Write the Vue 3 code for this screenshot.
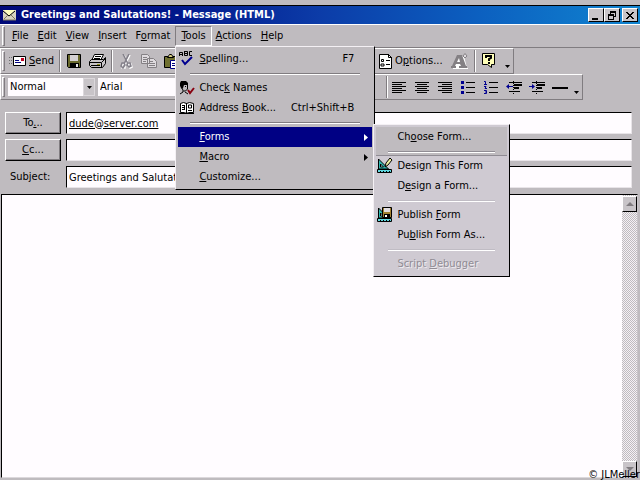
<script setup>
import { ref } from 'vue'

const to = ref('dude@server.com')
const cc = ref('')
const subject = ref('Greetings and Salutations!')
const body = ref('')
const style = ref('Normal')
const font = ref('Arial')

// Each label is split as [before, access key, after].
const menusBefore = [['', 'F', 'ile'], ['', 'E', 'dit'], ['', 'V', 'iew'], ['', 'I', 'nsert'], ['F', 'o', 'rmat']]
const menusAfter = [['', 'A', 'ctions'], ['', 'H', 'elp']]

const toolsMenu = [
  { label: ['', 'S', 'pelling...'], keys: 'F7', icon: 'spell' },
  { sep: true },
  { label: ['Chec', 'k', ' Names'], icon: 'names' },
  { label: ['Address ', 'B', 'ook...'], keys: 'Ctrl+Shift+B', icon: 'book' },
  { sep: true },
  {
    label: ['', 'F', 'orms'],
    active: true,
    arrow: true,
    sub: [
      { label: ['Ch', 'o', 'ose Form...'] },
      { sep: true },
      { label: ['Desi', 'g', 'n This Form'], icon: 'design' },
      { label: ['D', 'e', 'sign a Form...'] },
      { sep: true },
      { label: ['Publish ', 'F', 'orm'], icon: 'publish' },
      { label: ['Pu', 'b', 'lish Form As...'] },
      { sep: true },
      { label: ['Script ', 'D', 'ebugger'], disabled: true },
    ],
  },
  { label: ['', 'M', 'acro'], arrow: true },
  { label: ['', 'C', 'ustomize...'] },
]

const lines = {
  left: 'M0 1h14M0 3h10M0 5h14M0 7h10M0 9h14M0 11h10',
  center: 'M0 1h14M2 3h10M0 5h14M2 7h10M0 9h14M2 11h10',
  right: 'M0 1h14M4 3h10M0 5h14M4 7h10M0 9h14M4 11h10',
}
</script>

<template>
  <main class="window">
    <header class="title">
      <svg class="mail" width="13" height="12" viewBox="0 0 13 12">
        <path fill="#d8d4c0" d="M0 1h13v10H0z" />
        <path fill="#ffffc0" d="M1 1h11L6 7z" />
        <path fill="none" stroke="#000" d="M0 2l6 5 6-5" />
        <path fill="none" stroke="#807860" d="M1 10l4-4M12 10L8 6M0 11h13" />
      </svg>
      <h1>Greetings and Salutations! - Message (HTML)</h1>
      <div class="caption">
        <button aria-label="Minimize"><svg width="10" height="9" viewBox="0 0 10 9"><path d="M1 7h6v2H1z" /></svg></button>
        <button aria-label="Restore"><svg width="10" height="9" viewBox="0 0 10 9"><path d="M3 0h6v6H7V5h1V2H4v1H3zM1 3h6v6H1zM2 5v3h4V5z" fill-rule="evenodd" /></svg></button>
        <button aria-label="Close" class="close"><svg width="10" height="9" viewBox="0 0 10 9"><path d="M1 1h2v1h1v1h2V2h1V1h2v1H8v1H7v1H6v1h1v1h1v1h1v1H7V7H6V6H4v1H3v1H1V7h1V6h1V5h1V4H3V3H2V2H1z" /></svg></button>
      </div>
    </header>

    <nav class="menubar">
      <i class="grip"></i>
      <button v-for="m in menusBefore" :key="m.join('')" class="menu">{{ m[0] }}<u>{{ m[1] }}</u>{{ m[2] }}</button>
      <div class="open">
        <button class="menu pressed"><u>T</u>ools</button>
        <ul class="popup tools">
          <li v-for="(it, i) in toolsMenu" :key="i" :class="{ sep: it.sep }">
            <button v-if="!it.sep" class="item" :class="{ active: it.active }">
              <span class="icon">
                <svg v-if="it.icon === 'spell'" width="16" height="16" viewBox="0 0 16 16">
                  <path fill="none" stroke="#000" d="M.5 5V1.5h3V5M.5 3.5h3M5.500 0v4.500h3v-4h-3M5.500 2.500h3M13 .5h-2.500v4H13" />
                  <path fill="none" stroke="#000090" stroke-width="2" d="M3 9l3 4 7-7" />
                </svg>
                <svg v-else-if="it.icon === 'names'" width="16" height="16" viewBox="0 0 16 16">
                  <path fill="#000" d="M2 1h5l2 2v4L8 5H5L4 8l-1 1-2-3V3z" />
                  <path fill="none" stroke="#000" d="M8.500 4v5l-2 2h-2M2 7l2 3v2l-3 2M6 12l3 2M6.500 6v1" />
                  <path fill="none" stroke="#880010" stroke-width="2" d="M9 10l2 3 4-5" />
                </svg>
                <svg v-else-if="it.icon === 'book'" width="16" height="14" viewBox="0 0 16 14">
                  <path fill="#fff" stroke="#000" d="M1.500 2.500l3-1 3 1 3-1 4 1v9h-5l-2 1-2-1h-4zM7.500 2v10M0 12.500h15" />
                  <path fill="none" stroke="#000" d="M3 4.500h3M3 6.500h2M3 8.500h3M9.500 4v3h3V4h-3M9 9.500h4M5.500 5v4" />
                </svg>
              </span>
              <span>{{ it.label[0] }}<u>{{ it.label[1] }}</u>{{ it.label[2] }}</span>
              <span v-if="it.keys" class="keys">{{ it.keys }}</span>
              <svg v-if="it.arrow" class="more" width="4" height="7" viewBox="0 0 4 7"><path fill="currentColor" d="M0 0l4 3.500L0 7z" /></svg>
            </button>
            <ul v-if="it.sub" class="popup forms">
              <li v-for="(s, j) in it.sub" :key="j" :class="{ sep: s.sep, lead: j < 2 }">
                <button v-if="!s.sep" class="item" :disabled="s.disabled">
                  <span class="icon">
                    <svg v-if="s.icon" width="16" height="16" viewBox="0 0 16 16">
                      <path fill="#30b8b0" stroke="#000" d="M1.500 1v10h10z" />
                      <path fill="#d0f0f0" stroke="#000" d="M3.500 6v3h3z" />
                      <path fill="#60d8e0" stroke="#000" d="M.5 11.500h14v3H.5z" />
                      <path stroke="#000" d="M3.500 13v2M6.500 13v2M9.500 13v2M12.500 13v2" />
                      <path v-if="s.icon === 'design'" fill="#f0f0a0" stroke="#000" d="M8 9l1-4 4-5 2 2-4 5z" />
                      <g v-else>
                        <path fill="#a08030" stroke="#000" d="M5.500.5h9v10h-9z" />
                        <path fill="#e0dce0" d="M7 1h6v4H7z" />
                        <path fill="#000" d="M7 7h6v3H7z" />
                        <path fill="#fff" d="M8 8h2v2H8z" />
                      </g>
                    </svg>
                  </span>
                  <span>{{ s.label[0] }}<u>{{ s.label[1] }}</u>{{ s.label[2] }}</span>
                </button>
              </li>
            </ul>
          </li>
        </ul>
      </div>
      <button v-for="m in menusAfter" :key="m.join('')" class="menu">{{ m[0] }}<u>{{ m[1] }}</u>{{ m[2] }}</button>
    </nav>

    <div class="toolbar">
      <i class="grip"></i>
      <div class="start">
        <button class="tool">
          <svg width="17" height="12" viewBox="0 0 17 12">
            <path stroke="#707070" stroke-dasharray="1 1" d="M0 2.500h4M0 5.500h4M0 8.500h4" />
            <path fill="#fff" stroke="#000" d="M4.500 1.500h12v9h-12z" />
            <path fill="#c00020" d="M12 3h3v3h-3z" />
            <path stroke="#000080" d="M6 5.500h4M6 7.500h6" />
          </svg>
          <span><u>S</u>end</span>
        </button>
        <i class="rule"></i>
        <button class="tool" aria-label="Save">
          <svg width="15" height="15" viewBox="0 0 15 15">
            <path fill="#68682c" stroke="#000" d="M.5.5h13v13h-12l-1-1z" />
            <path fill="#d4d0d4" d="M3 1h8v6H3z" /><path fill="#000" d="M3 9h9v5H3z" /><path fill="#e8e8e8" d="M9 10h2v3H9z" />
          </svg>
        </button>
        <button class="tool" aria-label="Print">
          <svg width="17" height="15" viewBox="0 0 17 15">
            <path fill="#fff" stroke="#000" d="M5.500.5h9l-3 6h-9z" />
            <path stroke="#000" d="M6 2.500h6M5 4.500h6" />
            <path fill="#c8c4c8" stroke="#000" d="M.5 7.500l2-2h12l2-2v6l-3 4h-11l-2-2z" />
            <path fill="none" stroke="#000" d="M0 8.500h12.500v5M13 8l3-3M2 11.500h9" /><path stroke="#909020" d="M8 10.500h3" />
          </svg>
        </button>
        <i class="rule"></i>
        <button class="tool faded" aria-label="Cut">
          <svg width="13" height="15" viewBox="0 0 13 15">
            <g fill="none" stroke-width="1.500"><path stroke="#fff" d="M4 1l5 10M10 1L5 11M3 10h2v4H2v-3zM9 10h2l1 3-2 1-2-2z" /><path stroke="#84808a" d="M3 0l5 10M9 0L4 10M2 9h2l1 2-2 3-2-2zM8 9h2l1 3-2 1-2-2z" /></g>
          </svg>
        </button>
        <button class="tool" aria-label="Copy">
          <svg width="16" height="14" viewBox="0 0 16 14">
            <g fill="#dfdbdf" stroke="#848084"><path d="M.5.5h6l2 2v7h-8zM6.500 4.500h6l3 3v6h-9z" /><path d="M2 3.500h4M2 5.500h4M2 7.500h3M8 7.500h4M8 9.500h6M8 11.500h6" /></g>
          </svg>
        </button>
        <button class="tool" aria-label="Paste">
          <svg width="16" height="15" viewBox="0 0 16 15">
            <path fill="#707030" stroke="#000" d="M.5 2.500h12v11H.5z" /><path fill="#d8d080" stroke="#000" d="M3.500 3.500l2-3h2l2 3z" />
            <path fill="#fff" stroke="#000080" d="M6.500 6.500h8v8h-8z" /><path stroke="#000080" d="M8 9.500h5M8 11.500h5" />
          </svg>
        </button>
      </div>
      <button class="tool">
        <svg width="13" height="15" viewBox="0 0 13 15">
          <path fill="#fff" stroke="#000" d="M.5.500h9l3 3v11H.5z" />
          <path fill="none" stroke="#000" d="M9.500 0v3.500H13M2.500 5.500h2v2h-2zM2 10h3v2H2zM7 6.500h4M7 10.500h4" />
        </svg>
        <span>O<u>p</u>tions...</span>
      </button>
      <button class="tool" aria-label="Font">
        <svg width="17" height="16" viewBox="0 0 17 16">
          <path fill="#fff" d="M2 16v-1L8 3h5l3 12h1v1z" />
          <path fill="#848084" fill-rule="evenodd" d="M0 15v-2h1L6 2h5l4 11h1v2H8v-2h2l-1-2H5l-1 2h1v2zM6 9h3L8 5z" />
          <path fill="#dfdbdf" stroke="#848084" d="M12 3l2-2.500L16 3l-2 2z" />
        </svg>
      </button>
      <i class="rule"></i>
      <button class="tool" aria-label="Help">
        <svg width="14" height="16" viewBox="0 0 14 16">
          <path fill="#ffffb8" stroke="#000" d="M.5.500h12v11h-3v3l-4-3h-5z" />
          <path fill="none" stroke="#000" stroke-width="2" d="M4 5V3h5v2L7 6v2M6 10h2" />
        </svg>
      </button>
      <button class="drop" aria-label="More buttons"><svg width="5" height="3" viewBox="0 0 5 3"><path d="M0 0h5L2.500 3z" /></svg></button>
    </div>

    <div class="toolbar">
      <i class="grip"></i>
      <div class="start pickers">
        <label class="picker">
          <select v-model="style" aria-label="Style"><option>Normal</option></select>
          <span class="knob"><svg width="5" height="3" viewBox="0 0 5 3"><path d="M0 0h5L2.500 3z" /></svg></span>
        </label>
        <label class="picker wide">
          <select v-model="font" aria-label="Font name"><option>Arial</option></select>
          <span class="knob"><svg width="5" height="3" viewBox="0 0 5 3"><path d="M0 0h5L2.500 3z" /></svg></span>
        </label>
      </div>
      <i class="rule"></i>
      <div class="format">
        <button v-for="(d, name) in lines" :key="name" :aria-label="'Align ' + name">
          <svg width="17" height="13" viewBox="0 0 17 13"><path :d="d" transform="translate(1 .5)" stroke="#000" /></svg>
        </button>
        <button aria-label="Bullets">
          <svg width="17" height="13" viewBox="0 0 17 13"><path stroke="#000" d="M6 1.500h9M6 6.500h9M6 11.500h9" /><path fill="#000090" d="M1 0h3v3H1zM1 5h3v3H1zM1 10h3v3H1z" /></svg>
        </button>
        <button aria-label="Numbering">
          <svg width="17" height="13" viewBox="0 0 17 13"><path stroke="#000" d="M6 1.500h9M6 6.500h9M6 11.500h9" /><path fill="none" stroke="#000090" d="M1 .5h1.500V3M1 3.500h3M1 5.500h2l-1 2h2M1 9.500h2.500v3H1M2 11h1" /></svg>
        </button>
        <button aria-label="Decrease indent">
          <svg width="17" height="13" viewBox="0 0 17 13"><path stroke="#000" d="M3 1.500h13M3 10.500h11" /><path stroke="#000" stroke-width="2" d="M8 4h8M8 7h5" /><path stroke="#000" stroke-dasharray="1 1" d="M7.500 0v13" /><path stroke="#000090" d="M1 5.500h6" /><path fill="#000090" d="M0 5.500L3 3v5z" /></svg>
        </button>
        <button aria-label="Increase indent">
          <svg width="17" height="13" viewBox="0 0 17 13"><path stroke="#000" d="M3 1.500h13M3 10.500h11" /><path stroke="#000" stroke-width="2" d="M8 4h8M8 7h5" /><path stroke="#000" stroke-dasharray="1 1" d="M7.500 0v13" /><path stroke="#000090" d="M0 5.500h5" /><path fill="#000090" d="M6 5.500L3 3v5z" /></svg>
        </button>
        <button aria-label="Horizontal line">
          <svg width="17" height="13" viewBox="0 0 17 13"><path fill="#000" d="M0 6h16v2H0z" /></svg>
        </button>
      </div>
      <button class="drop" aria-label="More buttons"><svg width="5" height="3" viewBox="0 0 5 3"><path d="M0 0h5L2.500 3z" /></svg></button>
    </div>

    <form class="fields" @submit.prevent>
      <button type="button" class="push">To<u>.</u>..</button>
      <input v-model="to" class="address" aria-label="To">
      <button type="button" class="push"><u>C</u>c...</button>
      <input v-model="cc" class="address" aria-label="Cc">
      <label for="subject">Sub<u>j</u>ect:</label>
      <input id="subject" v-model="subject">
    </form>

    <section class="editor">
      <textarea v-model="body" aria-label="Message body"></textarea>
      <div class="scroll">
        <button aria-label="Scroll up"><svg width="8" height="4" viewBox="0 0 8 4"><path fill="#807c80" d="M4 0l4 4H0z" /></svg></button>
        <button aria-label="Scroll down"><svg width="8" height="4" viewBox="0 0 8 4"><path fill="#807c80" d="M0 0h8L4 4z" /></svg></button>
      </div>
    </section>
    <small class="credit">© JLMeller</small>
  </main>
</template>

<style>
body { background: #bfbbbf; }
</style>

<style scoped>
* { box-sizing: border-box; }
.window {
  position: relative;
  display: flex;
  flex-direction: column;
  min-height: 100vh;
  padding: 5px 0 2px;
  overflow: hidden;
  background: #bfbbbf;
  color: #000;
  font: 11px/14px "DejaVu Sans Condensed", "DejaVu Sans", sans-serif;
}
button, input, select, textarea { font: inherit; color: inherit; border: 0; margin: 0; padding: 0; background: none; border-radius: 0; outline: 0; }
u { text-underline-offset: 1px; }
svg { display: block; flex: none; }

.title {
  display: flex;
  align-items: center;
  height: 20px;
  padding: 0 2px 0 3px;
  border-top: 1px solid #000;
  border-bottom: 1px solid #fff;
  background: linear-gradient(90deg, #000878 0%, #001488 25%, #0c3ca8 50%, #0c60c0 75%, #1084d0 100%);
}
h1 { flex: 1; margin: 0 0 0 5px; color: #fff; font-size: 11px; line-height: 14px; white-space: nowrap; }
.caption { display: flex; }
.caption button {
  display: grid;
  place-items: center;
  width: 16px;
  height: 14px;
  background: #c8c4c8;
  border: 1px solid;
  border-color: #fff #000 #000 #fff;
}
.caption .close { margin-left: 2px; }

.grip { flex: none; align-self: center; width: 3px; height: 20px; margin: 0 3px 0 2px; border: 1px solid; border-color: #fff #807c80 #807c80 #fff; }
.menubar { display: flex; align-items: center; height: 23px; border-bottom: 1px solid #807c80; }
.menu { height: 20px; padding: 0 5px 0 4px; white-space: nowrap; }
.open { position: relative; }
.pressed { padding: 0 5px; border: 1px solid; border-color: #807c80 #fff #fff #807c80; }

.popup {
  position: absolute;
  z-index: 2;
  margin: 0;
  padding: 2px;
  list-style: none;
  background: #bfbbbf;
  border: 1px solid;
  border-color: #f4f0f4 #000 #000 #f4f0f4;
}
.tools { top: 100%; left: 0; width: 200px; }
.forms { top: -3px; left: 100%; width: 137px; margin-left: 1px; background: #cfcad2; }
.popup li { position: relative; }
.lead { background: #bfbbbf; }
.sep { height: 9px; padding: 4px 12px 0; }
.sep::before { content: ""; display: block; height: 0; border-top: 1px solid #807c80; border-bottom: 1px solid #fff; }
.forms .sep::before { border-top-color: #c0bcc4; }
.forms .lead.sep { border-bottom: 1px solid #908c94; }
.forms .lead.sep::before { border-top-color: #908c94; }
.item { display: flex; align-items: center; width: 100%; height: 20px; padding-right: 4px; text-align: left; white-space: nowrap; }
.item.active { background: #000084; color: #fff; }
.item:disabled { color: #908c94; text-shadow: 1px 1px #f0ecf0; }
.icon { display: grid; place-items: center; width: 18px; margin-right: 3px; }
.keys { margin-left: auto; padding-right: 14px; }
.more { margin-left: auto; }

.toolbar { display: flex; align-items: center; align-self: flex-start; height: 26px; padding-right: 3px; border: 1px solid; border-color: #fff #807c80 #807c80 #fff; }
.toolbar .grip { margin-left: 1px; }
.start { display: flex; align-items: center; width: 367px; }
.tool { display: flex; align-items: center; gap: 3px; margin: 0 4px; white-space: nowrap; }
.start .tool { margin-right: 3px; }
.start .tool:first-child { margin-left: 1px; }
.rule { flex: none; width: 2px; height: 22px; border-left: 1px solid #807c80; border-right: 1px solid #fff; margin: 0 2px; }
.faded { padding: 0 1px; }
.drop { align-self: flex-end; margin: 0 0 5px 5px; }
.pickers { gap: 3px; width: 376px; }
.picker { display: flex; width: 87px; height: 18px; background: #fffcff; }
.wide { width: 140px; }
.picker select { flex: 1; min-width: 0; appearance: none; padding: 0 2px; }
.knob { display: grid; place-items: center; width: 12px; background: #c8c4c8; border: 1px solid #dcd8dc; }
.format { display: flex; gap: 6px; padding-left: 1px; }

.fields { display: grid; grid-template-columns: 56px 1fr; gap: 5px; padding: 12px 8px 6px 5px; align-items: center; }
.fields label { padding-left: 5px; }
.push { height: 22px; border: 1px solid; border-color: #fff #000 #000 #fff; box-shadow: inset -1px -1px #807c80; }
.fields input { width: 100%; height: 22px; padding: 0 2px; background: #fffcff; border: 1px solid; border-color: #000 #e8e4e8 #e8e4e8 #000; }
.fields .address { text-decoration: underline; text-underline-offset: 1px; }

.editor { display: flex; flex: 1; margin: 0 2px 0 1px; background: #fffcff; border: 1px solid; border-color: #000 #c8c4c8 #dcd8dc #000; }
textarea { flex: 1; min-height: 200px; padding: 4px; resize: none; }
.scroll { display: flex; flex-direction: column; justify-content: space-between; width: 15px; padding-top: 1px; background: repeating-conic-gradient(#bfbbbf 0 25%, #f4f0f4 0 50%) 0 0 / 2px 2px; }
.scroll button { display: grid; place-items: center; height: 16px; background: #c8c4c8; border: 1px solid; border-color: #fff #000 #000 #fff; }
.credit { position: absolute; right: 0; bottom: -2px; font: inherit; }
</style>
